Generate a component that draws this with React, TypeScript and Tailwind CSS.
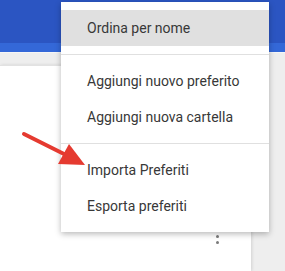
import React from "react";

export default function App() {
  const items1 = ["Ordina per nome"];
  return (
    <div
      className="relative w-[285px] h-[271px] overflow-hidden bg-[#eeeeee]"
      style={{ fontFamily: "Roboto, 'Liberation Sans', sans-serif" }}
    >
      {/* header */}
      <div className="flex flex-col">
        <div className="h-[43px] bg-[#2b55c2]" />
        <div className="h-[9px] bg-[#3468d8]" />
        <div className="h-px bg-[#f6f6f6]" />
      </div>
      {/* body */}
      <div className="flex pt-[12px] h-[218px]">
        <div className="w-[251px] h-full bg-white border-t border-[#e2e2e2] shadow-[1px_0_3px_rgba(0,0,0,0.12)] flex flex-col">
          <div className="mt-[162px] ml-[216px] flex flex-col gap-[3.5px]">
            <span className="block w-[3px] h-[3px] rounded-full bg-[#7a7a7a]" />
            <span className="block w-[3px] h-[3px] rounded-full bg-[#7a7a7a]" />
            <span className="block w-[3px] h-[3px] rounded-full bg-[#7a7a7a]" />
          </div>
        </div>
        <div className="flex-1" />
      </div>

      {/* menu overlay */}
      <div className="absolute left-[61px] top-[2px] w-[208px] bg-white py-2 shadow-[0_2px_6px_rgba(0,0,0,0.28)] text-[14px] text-[#383838]">
        {items1.map((t) => (
          <div key={t} className="h-[36px] flex items-center pl-[26px] bg-[#e0e0e0]">
            {t}
          </div>
        ))}
        <div className="my-2 h-px bg-[#e0e0e0]" />
        <div className="h-[36px] flex items-center pl-[26px]">Aggiungi nuovo preferito</div>
        <div className="h-[36px] flex items-center pl-[26px]">Aggiungi nuova cartella</div>
        <div className="my-2 h-px bg-[#e0e0e0]" />
        <div className="h-[36px] flex items-center pl-[26px]">Importa Preferiti</div>
        <div className="h-[36px] flex items-center pl-[26px]">Esporta preferiti</div>
      </div>

      {/* red arrow */}
      <svg className="absolute left-0 top-0" width="285" height="271" viewBox="0 0 285 271">
        <line x1="24" y1="134" x2="67" y2="155.5" stroke="#e53a30" strokeWidth="4" strokeLinecap="round" />
        <polygon points="85,165 58,164 69,144" fill="#e53a30" />
      </svg>
    </div>
  );
}
